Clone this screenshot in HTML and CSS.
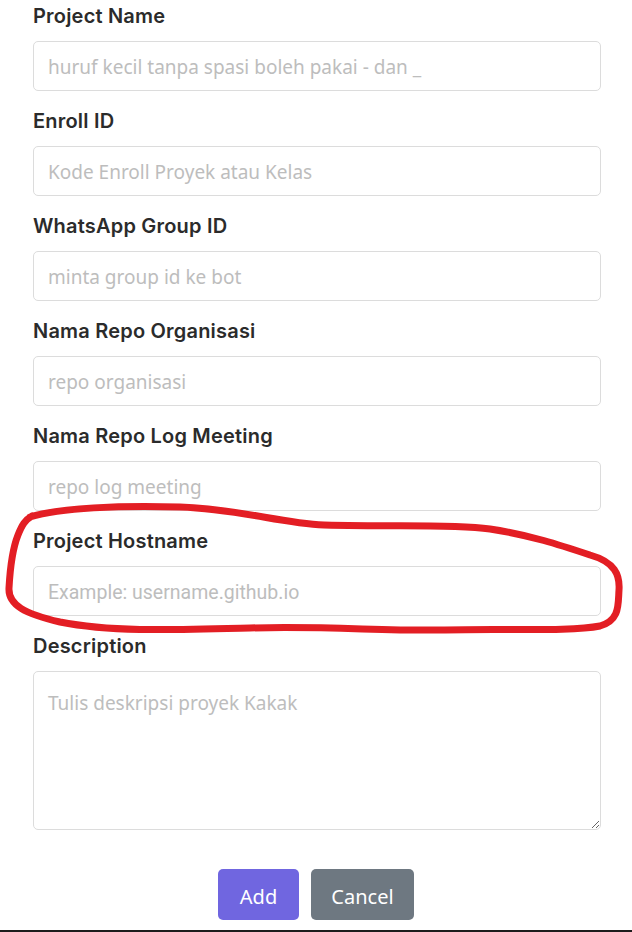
FILE: index.html
```html
<!DOCTYPE html>
<html lang="id">
<head>
<meta charset="utf-8">
<title>Add Project</title>
<link rel="stylesheet" href="styles.css">
</head>
<body>
<div class="page">
  <form class="project-form">
    <div class="group">
      <label class="label" for="name">Project Name</label>
      <input class="control" id="name" type="text" placeholder="huruf kecil tanpa spasi boleh pakai - dan _">
    </div>
    <div class="group">
      <label class="label" for="enroll">Enroll ID</label>
      <input class="control" id="enroll" type="text" placeholder="Kode Enroll Proyek atau Kelas">
    </div>
    <div class="group">
      <label class="label" for="wa">WhatsApp Group ID</label>
      <input class="control" id="wa" type="text" placeholder="minta group id ke bot">
    </div>
    <div class="group">
      <label class="label" for="repo">Nama Repo Organisasi</label>
      <input class="control" id="repo" type="text" placeholder="repo organisasi">
    </div>
    <div class="group">
      <label class="label" for="log">Nama Repo Log Meeting</label>
      <input class="control" id="log" type="text" placeholder="repo log meeting">
    </div>
    <div class="group">
      <label class="label" for="host">Project Hostname</label>
      <input class="control control-url" id="host" type="text" placeholder="Example: username.github.io">
    </div>
    <div class="group">
      <label class="label" for="desc">Description</label>
      <textarea class="control control-area" id="desc" placeholder="Tulis deskripsi proyek Kakak"></textarea>
    </div>
    <div class="actions">
      <button type="button" class="btn btn-primary">Add</button>
      <button type="button" class="btn btn-secondary">Cancel</button>
    </div>
  </form>
  <svg class="annotation" width="632" height="932" viewBox="0 0 632 932" aria-hidden="true">
    <path d="M30,517 C60,508 120,505 180,507 C240,509 280,523 324,525 C400,527 450,524 490,529 C530,535 560,545 590,555 C615,562 620,575 619,590 C618,605 620,620 600,626 C570,632 500,628 445,630 C380,631 330,626 250,628 C170,630 110,632 60,622 C25,614 8,605 9,588 C10,570 12,550 18,535 C22,525 25,520 32,516" fill="none" stroke="#e31e24" stroke-width="7" stroke-linecap="round" stroke-linejoin="round"/>
  </svg>
</div>
</body>
</html>
```

FILE: styles.css
```css
* { box-sizing: border-box; }

html, body {
  margin: 0;
  padding: 0;
  background: #ffffff;
}

.page {
  position: relative;
  width: 632px;
  height: 932px;
  overflow: hidden;
  border-bottom: 2px solid #1c1c1c;
}

.project-form {
  display: flex;
  flex-direction: column;
  padding: 0 31px 0 33px;
}

.group {
  display: flex;
  flex-direction: column;
  margin-bottom: 14px;
}

.label {
  display: block;
  font-family: "Inter", "Noto Sans", sans-serif;
  font-weight: 600;
  font-size: 20px;
  line-height: 30px;
  padding-top: 1px;
  margin-bottom: 10px;
  color: #2b2b2b;
  letter-spacing: 0.2px;
}

.control {
  display: block;
  width: 100%;
  height: 50px;
  padding: 2px 14px 0;
  border: 1px solid #dcdcdc;
  border-radius: 5px;
  background: #ffffff;
  font-family: "Noto Sans", "Open Sans", sans-serif;
  font-size: 19px;
  color: #333;
  outline: none;
}

.control::placeholder {
  color: #bdbdbd;
}

.control-url {
  font-family: "Roboto", sans-serif;
  font-weight: 400;
  font-size: 19.5px;
}

.control-area {
  height: 159px;
  padding: 17px 14px;
  resize: vertical;
  line-height: 28px;
}

.actions {
  display: flex;
  justify-content: center;
  gap: 12px;
  margin-top: 25px;
  padding-right: 2px;
}

.btn {
  height: 51px;
  border: none;
  border-radius: 5px;
  color: #ffffff;
  font-family: "Noto Sans", "Open Sans", sans-serif;
  font-size: 20px;
  padding: 4px 0 0;
  cursor: pointer;
}

.btn-primary {
  background: #7066e0;
  width: 81px;
}

.btn-secondary {
  background: #6e7881;
  width: 103px;
}

.annotation {
  position: absolute;
  left: 0;
  top: 0;
  pointer-events: none;
}
```
